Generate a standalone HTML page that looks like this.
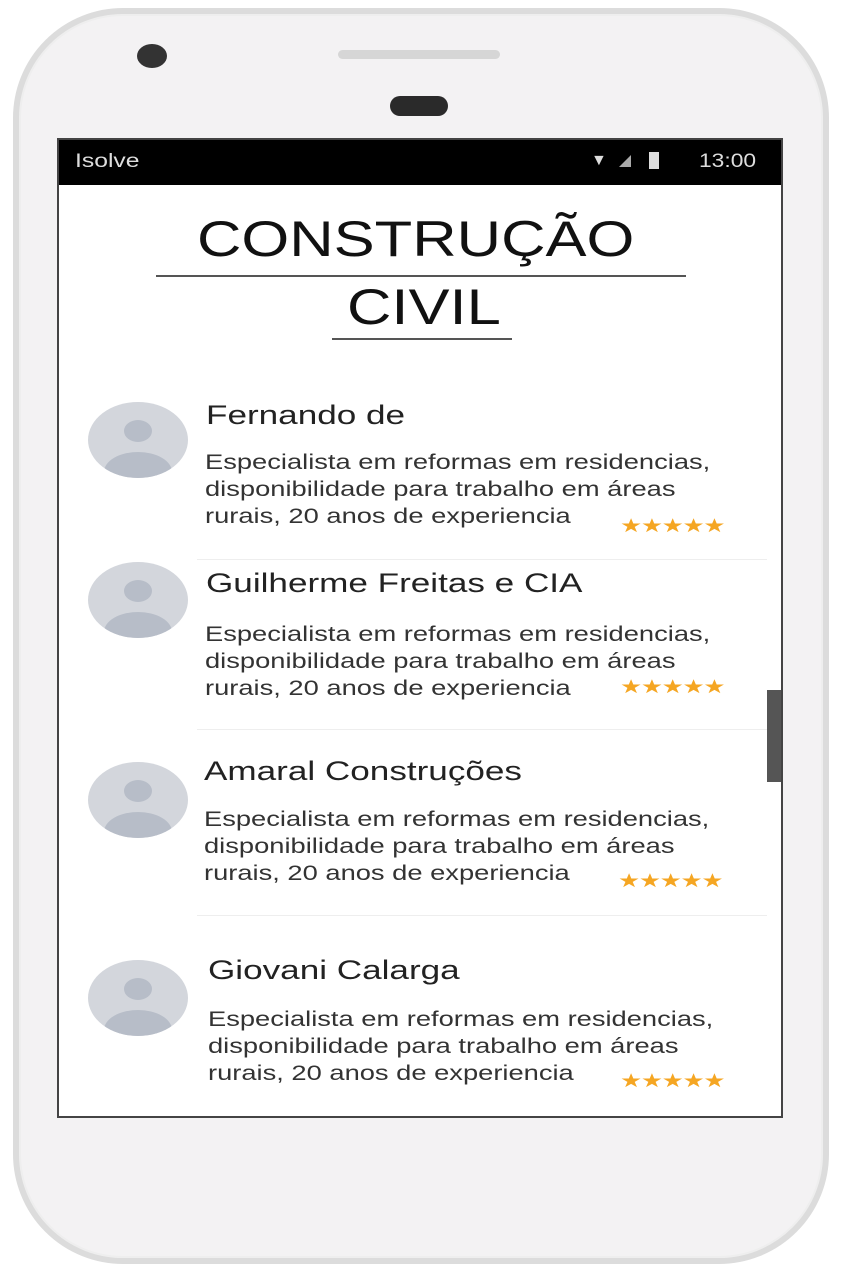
<!DOCTYPE html>
<html><head><meta charset="utf-8"><style>
*{margin:0;padding:0;box-sizing:border-box}
body{width:841px;height:1280px;background:#fff;position:relative;overflow:hidden;font-family:"Liberation Sans",sans-serif}
.phone{position:absolute;left:13px;top:8px;width:816px;height:1256px;border-radius:110px;background:#f3f2f3;border:6px solid #dcdcdc;box-shadow:inset 0 0 0 2px #eee}
.screen{position:absolute;left:57px;top:138px;width:726px;height:980px;background:#fff;border:2px solid #444;overflow:hidden}
.status{position:absolute;left:0;top:0;width:100%;height:45px;background:#000;color:#ddd;font-size:19px}
.abs{position:absolute}
.sx{transform-origin:left center;transform:scaleX(1.3);white-space:nowrap}
.name{position:absolute;font-size:27px;color:#222;transform-origin:left center;transform:scaleX(1.3);white-space:nowrap}
.desc{position:absolute;font-size:21px;color:#333;line-height:27px;transform-origin:left top;transform:scaleX(1.3);white-space:nowrap}
.stars{position:absolute;color:#f5a623;font-size:19px;letter-spacing:-1px;transform-origin:left center;transform:scaleX(1.3);white-space:nowrap}
.av{position:absolute;left:29px;width:100px;height:76px;border-radius:50%;background:#d3d6dc;overflow:hidden}
.av:before{content:"";position:absolute;left:36px;top:18px;width:28px;height:22px;border-radius:50%;background:#b7bdc8}
.av:after{content:"";position:absolute;left:16px;top:50px;width:68px;height:40px;border-radius:50%;background:#b7bdc8}
.div{position:absolute;left:138px;width:570px;height:1px;background:#eee}
</style></head><body>
<div class="phone"></div>
<div class="abs" style="left:137px;top:44px;width:30px;height:24px;border-radius:50%;background:#333"></div>
<div class="abs" style="left:338px;top:50px;width:162px;height:9px;border-radius:5px;background:#d6d6d6"></div>
<div class="abs" style="left:390px;top:96px;width:58px;height:20px;border-radius:10px;background:#2a2a2a"></div>
<div class="screen">
<div class="status"><span class="abs sx" style="left:16px;top:11px">Isolve</span>
<span class="abs" style="left:532px;top:12px;font-size:16px">▼</span>
<span class="abs" style="left:560px;top:15px;width:0;height:0;border-left:12px solid transparent;border-bottom:12px solid #aaa"></span>
<span class="abs" style="left:590px;top:12px;width:10px;height:17px;background:#ddd"></span>
<span class="abs sx" style="left:640px;top:11px;transform:scaleX(1.2)">13:00</span></div>
<div class="abs" style="left:138px;top:70px;font-size:50px;color:#111;transform-origin:left center;transform:scaleX(1.23)">CONSTRUÇÃO</div>
<div class="abs" style="left:97px;top:135px;width:530px;height:2px;background:#555"></div>
<div class="abs" style="left:288px;top:138px;font-size:50px;color:#111;transform-origin:left center;transform:scaleX(1.23)">CIVIL</div>
<div class="abs" style="left:273px;top:198px;width:180px;height:2px;background:#555"></div>

<div class="av" style="top:262px"></div>
<div class="name" style="left:147px;top:260px">Fernando de</div>
<div class="desc" style="left:146px;top:309px">Especialista em reformas em residencias,<br>disponibilidade para trabalho em áreas<br>rurais, 20 anos de experiencia</div>
<div class="stars" style="left:561px;top:375px">★★★★★</div>
<div class="div" style="top:419px"></div>

<div class="av" style="top:422px"></div>
<div class="name" style="left:147px;top:428px">Guilherme Freitas e CIA</div>
<div class="desc" style="left:146px;top:481px">Especialista em reformas em residencias,<br>disponibilidade para trabalho em áreas<br>rurais, 20 anos de experiencia</div>
<div class="stars" style="left:561px;top:536px">★★★★★</div>
<div class="div" style="top:589px"></div>

<div class="av" style="top:622px"></div>
<div class="name" style="left:145px;top:616px">Amaral Construções</div>
<div class="desc" style="left:145px;top:666px">Especialista em reformas em residencias,<br>disponibilidade para trabalho em áreas<br>rurais, 20 anos de experiencia</div>
<div class="stars" style="left:559px;top:730px">★★★★★</div>
<div class="div" style="top:775px"></div>

<div class="av" style="top:820px"></div>
<div class="name" style="left:149px;top:815px">Giovani Calarga</div>
<div class="desc" style="left:149px;top:866px">Especialista em reformas em residencias,<br>disponibilidade para trabalho em áreas<br>rurais, 20 anos de experiencia</div>
<div class="stars" style="left:561px;top:930px">★★★★★</div>

<div class="abs" style="left:708px;top:550px;width:14px;height:92px;background:#555"></div>
</div>
</body></html>
